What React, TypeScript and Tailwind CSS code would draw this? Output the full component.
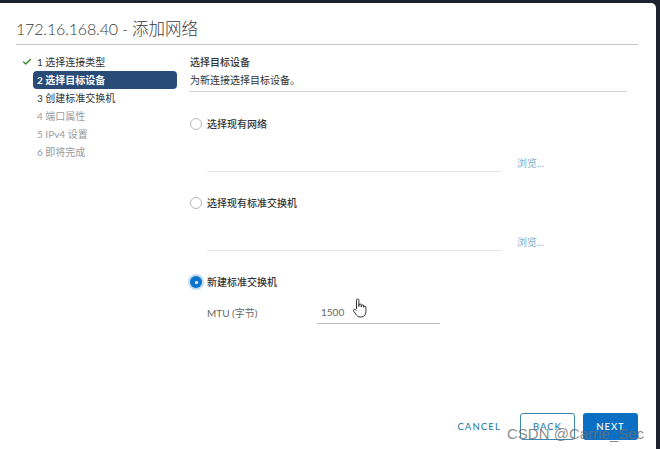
import { Check } from "lucide-react";

const steps = [
  { label: "1 选择连接类型", state: "done" },
  { label: "2 选择目标设备", state: "active" },
  { label: "3 创建标准交换机", state: "todo" },
  { label: "4 端口属性", state: "disabled" },
  { label: "5 IPv4 设置", state: "disabled" },
  { label: "6 即将完成", state: "disabled" },
];

function Radio({ checked }: { checked?: boolean }) {
  if (checked) {
    return (
      <span className="flex h-[12px] w-[12px] items-center justify-center rounded-full bg-[#0a74cc] shadow-[0_0_0_2px_rgba(10,116,204,0.25)]">
        <span className="h-[3px] w-[3px] rounded-full bg-white" />
      </span>
    );
  }
  return <span className="h-[12px] w-[12px] rounded-full border border-[#b8b8b8] bg-white" />;
}

function HandCursor() {
  return (
    <svg width="15" height="20" viewBox="0 0 15 20" className="absolute left-[352px] top-[295px]">
      <path
        d="M4.5 11V2.2a1.2 1.2 0 0 1 2.4 0V8.5V7.2a1.2 1.2 0 0 1 2.4 0V9V8a1.2 1.2 0 0 1 2.4 0v1.4V9.2a1.1 1.1 0 0 1 2.2 0v4.3c0 3-1.8 5.5-4.6 5.5H8c-1.8 0-2.8-.9-3.8-2.3L1.6 13a1.2 1.2 0 0 1 1.8-1.5L4.5 12.8"
        fill="white"
        stroke="#333"
        strokeWidth="1"
        strokeLinejoin="round"
      />
    </svg>
  );
}

export default function App() {
  return (
    <div className="h-[449px] w-[660px] overflow-hidden bg-[#1b222c] pr-[4px] pt-[3px] font-['Lato','Noto_Sans_CJK_SC',sans-serif]">
      <div className="relative flex h-full flex-col rounded-tr-[5px] bg-white text-[#333]">
        {/* header */}
        <div className="ml-[16px] mr-[18px] flex h-[42px] items-end border-b border-[#c8c8c8] pb-[3px]">
          <h1 className="text-[#3a3a3a] leading-[24px] font-light">
            <span className="text-[16px] tracking-[-0.01em]">172.16.168.40 - </span>
            <span className="text-[16.5px]">添加网络</span>
          </h1>
        </div>

        <div className="flex pt-[8px]">
          {/* steps */}
          <nav className="w-[190px] shrink-0 pl-[33px]">
            {steps.map((s) => (
              <div
                key={s.label}
                className={`relative flex h-[18px] w-[144px] items-center rounded-[4px] pl-[4px] text-[10px] ${
                  s.state === "active"
                    ? "bg-[#294b78] font-bold text-white"
                    : s.state === "disabled"
                    ? "text-[#9a9a9a]"
                    : "text-[#333]"
                }`}
              >
                {s.state === "done" && (
                  <Check className="absolute left-[-11px] h-[10px] w-[10px] text-[#3e8a2f]" strokeWidth={3.5} />
                )}
                {s.label}
              </div>
            ))}
          </nav>

          {/* content */}
          <div className="w-[436px] text-[10px]">
            <div className="border-b border-[#cfcfcf] pb-[2px] leading-[18px]">
              <p className="font-medium">选择目标设备</p>
              <p>为新连接选择目标设备。</p>
            </div>

            <label className="mt-[23px] flex h-[18px] items-center gap-[5px] font-medium">
              <Radio />
              选择现有网络
            </label>
            <div className="mt-[19px] flex items-end pl-[17px]">
              <div className="h-[20px] w-[295px] border-b border-[#e6e6e6]" />
              <span className="mb-[1px] ml-[15px] text-[#7fb0cc]">浏览...</span>
            </div>

            <label className="mt-[22px] flex h-[18px] items-center gap-[5px] font-medium">
              <Radio />
              选择现有标准交换机
            </label>
            <div className="mt-[19px] flex items-end pl-[17px]">
              <div className="h-[20px] w-[295px] border-b border-[#e6e6e6]" />
              <span className="ml-[15px] mb-[1px] text-[#7fb0cc]">浏览...</span>
            </div>

            <label className="mt-[22px] flex h-[18px] items-center gap-[5px] font-medium">
              <Radio checked />
              新建标准交换机
            </label>
            <div className="mt-[14px] flex items-end pl-[17px] text-[#666]">
              <span className="mb-[3px] w-[110px]">MTU (字节)</span>
              <div className="w-[123px] border-b border-[#bdbdbd] pb-[3px] pl-[4px]">1500</div>
            </div>
          </div>
        </div>

        {/* footer */}
        <div className="mt-auto flex items-center justify-end gap-[8px] pb-[9px] pr-[18px]">
          <button className="mr-[11px] pt-[2px] text-[9.5px] font-medium tracking-[0.12em] text-[#2f7ea6]">CANCEL</button>
          <button className="h-[27px] w-[55px] rounded-[3px] border border-[#3f86ad] pt-[2px] text-[9.5px] font-medium tracking-[0.1em] text-[#2f7ea6]">
            BACK
          </button>
          <button className="h-[27px] w-[55px] rounded-[3px] bg-[#0b6fc4] pt-[2px] text-[9.5px] font-medium tracking-[0.1em] text-white">
            NEXT
          </button>
        </div>

        <HandCursor />

        <span className="pointer-events-none absolute left-[507px] top-[421px] font-['Liberation_Sans',sans-serif] text-[15px] leading-[20px] text-[rgba(110,110,110,0.8)]">
          CSDN @Carrie_Sec
        </span>
      </div>
    </div>
  );
}
